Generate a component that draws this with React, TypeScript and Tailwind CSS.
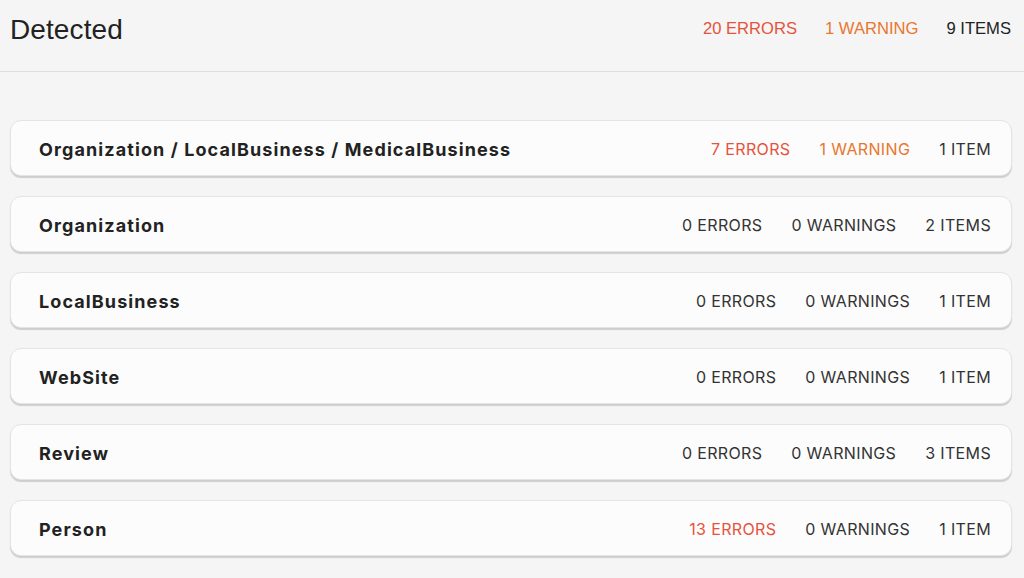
import React from 'react';

type Row = { name: string; errors: number; warnings: number; items: number };

const rows: Row[] = [
  { name: 'Organization / LocalBusiness / MedicalBusiness', errors: 7, warnings: 1, items: 1 },
  { name: 'Organization', errors: 0, warnings: 0, items: 2 },
  { name: 'LocalBusiness', errors: 0, warnings: 0, items: 1 },
  { name: 'WebSite', errors: 0, warnings: 0, items: 1 },
  { name: 'Review', errors: 0, warnings: 0, items: 3 },
  { name: 'Person', errors: 13, warnings: 0, items: 1 },
];

const plural = (n: number, word: string) => `${n} ${word}${n === 1 ? '' : 'S'}`;

const App: React.FC = () => {
  return (
    <div className="min-h-[578px] bg-[#f5f5f5] text-[#222]">
      {/* Header */}
      <header className="h-[72px] flex items-start justify-between border-b border-[#dedede] pl-[10px] pr-[13px] font-['Liberation_Sans',Arial,sans-serif]">
        <h1 className="text-[28px] leading-none mt-[16px] text-[#222] tracking-[0.1px]">Detected</h1>
        <div className="flex gap-[28px] text-[16.6px] leading-none mt-[21px]">
          <span className="text-[#e5533d]">20 ERRORS</span>
          <span className="text-[#e8772e]">1 WARNING</span>
          <span className="text-[#222]">9 ITEMS</span>
        </div>
      </header>

      {/* Cards */}
      <div className="pt-[48px] px-[10px] pr-[12px] flex flex-col gap-[20px] font-['Inter',sans-serif]">
        {rows.map((r) => (
          <div
            key={r.name}
            className="h-[56px] flex items-center justify-between bg-[#fcfcfc] border border-[#e4e4e4] rounded-[11px] shadow-[0_2px_1px_rgba(0,0,0,0.16)] pl-[28px] pr-[20px] pt-[2px]"
          >
            <span className="text-[18px] font-bold tracking-[1.1px] text-[#222]">{r.name}</span>
            <div className="flex gap-[29px] text-[16px] tracking-[0.35px]">
              <span className={r.errors > 0 ? 'text-[#e5533d]' : 'text-[#333]'}>{plural(r.errors, 'ERROR')}</span>
              <span className={r.warnings > 0 ? 'text-[#e8772e]' : 'text-[#333]'}>{plural(r.warnings, 'WARNING')}</span>
              <span className="text-[#333]">{plural(r.items, 'ITEM')}</span>
            </div>
          </div>
        ))}
      </div>
    </div>
  );
};

export default App;
